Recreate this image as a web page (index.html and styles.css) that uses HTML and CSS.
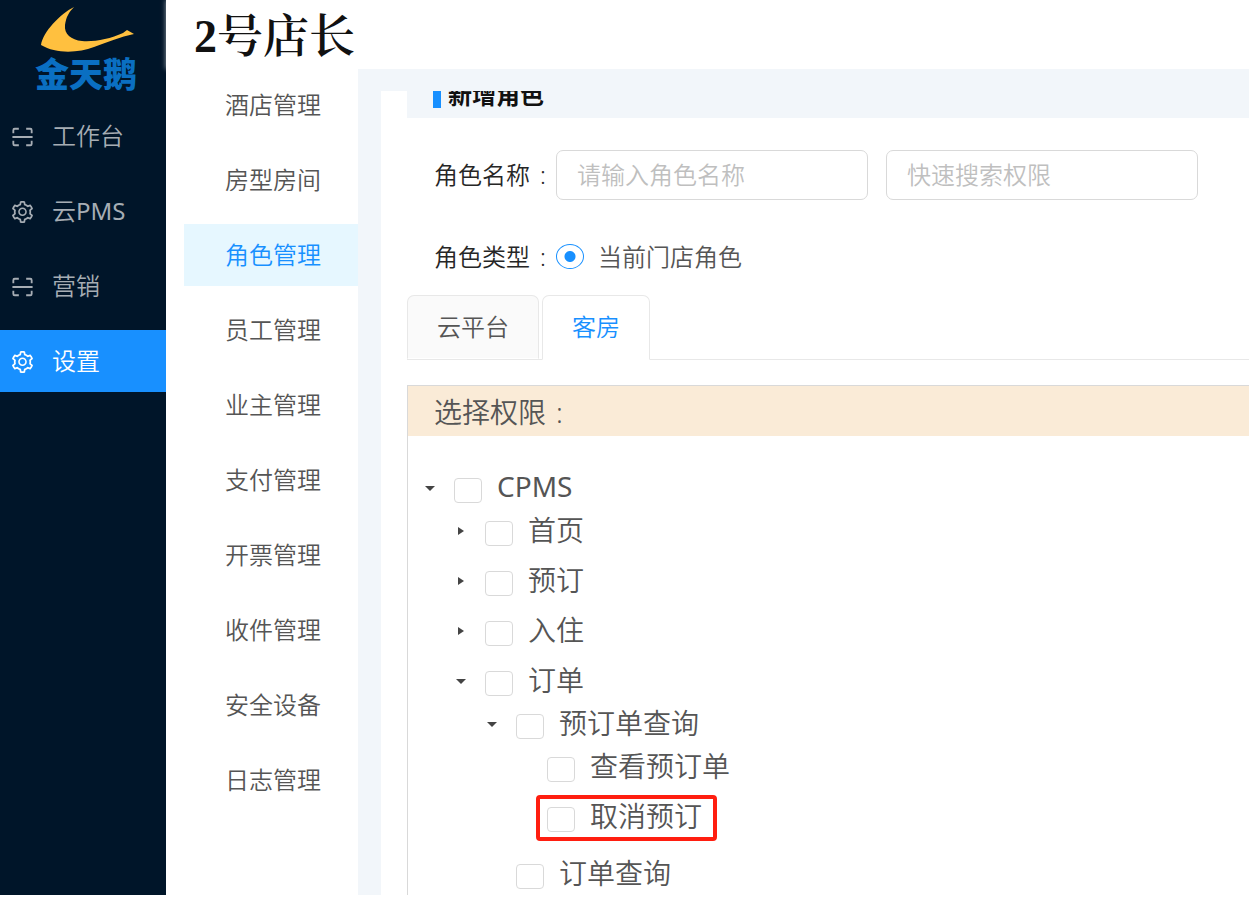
FILE: index.html
```html
<!DOCTYPE html>
<html lang="zh-CN">

<head>
    <meta charset="UTF-8">
    <meta name="viewport" content="width=device-width, initial-scale=1.0">
    <title>角色管理</title>
    <link rel="stylesheet" href="styles.css">
</head>

<body>
    <!-- 图标 -->
    <svg class="icon-defs" width="0" height="0">
        <symbol id="icon-scan" viewBox="0 0 24 24">
            <path d="M2 8V4.500Q2 3 3.500 3H8M16 3h4.500Q22 3 22 4.500V8M2 16v3.500Q2 21 3.500 21H8M16 21h4.500Q22 21 22 19.500V16M1 12h22" fill="none" stroke="currentColor" stroke-width="2" />
        </symbol>
        <symbol id="icon-setting" viewBox="64 64 896 896">
            <path fill="currentColor" d="M924.8 625.7l-65.5-56c3.1-19 4.7-38.4 4.7-57.8s-1.6-38.8-4.7-57.8l65.5-56a32.03 32.03 0 0 0 9.3-35.2l-.9-2.6a443.74 443.74 0 0 0-79.7-137.9l-1.800-2.100a32.12 32.12 0 0 0-35.1-9.500l-81.300 28.900c-30-24.600-63.500-44-99.700-57.600l-15.700-85a32.05 32.05 0 0 0-25.800-25.700l-2.700-.5c-52.100-9.400-106.900-9.400-159 0l-2.700.5a32.05 32.05 0 0 0-25.800 25.700l-15.800 85.400a351.86 351.86 0 0 0-99 57.400l-81.900-29.100a32 32 0 0 0-35.100 9.500l-1.800 2.100a446.02 446.02 0 0 0-79.700 137.900l-.9 2.600c-4.500 12.500-.8 26.500 9.300 35.200l66.300 56.600c-3.100 18.800-4.600 38-4.600 57.100 0 19.200 1.500 38.400 4.600 57.100L99 625.500a32.03 32.03 0 0 0-9.300 35.200l.9 2.600c18.100 50.400 44.900 96.900 79.700 137.900l1.800 2.100a32.12 32.12 0 0 0 35.100 9.500l81.900-29.100c29.800 24.500 63.100 43.900 99 57.400l15.800 85.400a32.05 32.05 0 0 0 25.800 25.700l2.700.5a449.4 449.4 0 0 0 159 0l2.700-.5a32.05 32.05 0 0 0 25.800-25.700l15.700-85a350 350 0 0 0 99.700-57.600l81.300 28.900a32 32 0 0 0 35.100-9.500l1.800-2.100c34.800-41.100 61.600-87.500 79.700-137.900l.9-2.600c4.500-12.300.8-26.300-9.300-35zM788.300 465.900c2.500 15.100 3.800 30.600 3.800 46.100s-1.300 31-3.800 46.100l-6.600 40.100 74.700 63.900a370.03 370.03 0 0 1-42.600 73.600L721 702.800l-31.400 25.800c-23.900 19.600-50.500 35-79.300 45.800l-38.100 14.300-17.900 97a377.5 377.5 0 0 1-85 0l-17.900-97.200-37.800-14.500c-28.500-10.800-55-26.200-78.700-45.700l-31.400-25.900-93.400 33.200c-17-22.900-31.200-47.600-42.600-73.600l75.500-64.500-6.500-40c-2.400-14.900-3.700-30.300-3.700-45.500 0-15.300 1.200-30.600 3.700-45.500l6.500-40-75.500-64.500c11.300-26.100 25.600-50.700 42.600-73.600l93.400 33.200 31.400-25.900c23.700-19.500 50.200-34.900 78.700-45.700l37.900-14.300 17.900-97.200c28.100-3.200 56.800-3.200 85 0l17.900 97 38.100 14.300c28.700 10.800 55.400 26.200 79.300 45.800l31.400 25.800 92.800-32.900c17 22.900 31.200 47.600 42.600 73.600L781.800 426l6.500 39.900zM512 326c-97.200 0-176 78.800-176 176s78.800 176 176 176 176-78.800 176-176-78.800-176-176-176zm79.200 255.200A111.600 111.600 0 0 1 512 614c-29.900 0-58-11.700-79.200-32.800A111.600 111.600 0 0 1 400 502c0-29.900 11.700-58 32.800-79.200C454 401.600 482.100 390 512 390c29.900 0 58 11.600 79.200 32.800A111.600 111.600 0 0 1 624 502c0 29.900-11.700 58-32.800 79.200z" />
        </symbol>
    </svg>

    <div class="layout">
        <aside class="sidebar">
            <div class="logo">
                <svg class="logo-swan" viewBox="0 0 96 48" width="96" height="48">
                    <path d="M34 1C20 8 3 26 1 39C16 48 38 47 54 41C68 36 80 31 94 28L87 24L83 27C70 33 54 36 42 35C31 34 24 28 25 19C26 11 29 6 34 1Z" fill="#ffc03f" />
                </svg>
                <span class="logo-text">金天鹅</span>
            </div>
            <nav class="main-menu">
                <a href="#"><svg><use href="#icon-scan" /></svg><span>工作台</span></a>
                <a href="#"><svg><use href="#icon-setting" /></svg><span>云<b>PMS</b></span></a>
                <a href="#"><svg><use href="#icon-scan" /></svg><span>营销</span></a>
                <a href="#" class="active"><svg><use href="#icon-setting" /></svg><span>设置</span></a>
            </nav>
        </aside>

        <div class="main">
            <header class="header">
                <h1 class="brand">2号店长</h1>
            </header>
            <div class="body">
                <nav class="sub-menu">
                    <a href="#">酒店管理</a>
                    <a href="#">房型房间</a>
                    <a href="#" class="active">角色管理</a>
                    <a href="#">员工管理</a>
                    <a href="#">业主管理</a>
                    <a href="#">支付管理</a>
                    <a href="#">开票管理</a>
                    <a href="#">收件管理</a>
                    <a href="#">安全设备</a>
                    <a href="#">日志管理</a>
                </nav>

                <main class="content">
                    <div class="title-bar">
                        <h2 class="title">新增角色</h2>
                    </div>

                    <form class="role-form">
                        <div class="form-row">
                            <label class="form-label" for="roleName">角色名称<span class="colon">:</span></label>
                            <div class="inputs">
                                <input type="text" id="roleName" placeholder="请输入角色名称">
                                <input type="text" id="search" aria-label="快速搜索权限" placeholder="快速搜索权限">
                            </div>
                        </div>
                        <div class="form-row type-row">
                            <span class="form-label">角色类型<span class="colon">:</span></span>
                            <label class="radio">
                                <input type="radio" name="roleType" checked><span>当前门店角色</span>
                            </label>
                        </div>
                    </form>

                    <div class="tabs">
                        <button type="button" class="tab">云平台</button>
                        <button type="button" class="tab active">客房</button>
                    </div>

                    <section class="panel">
                        <h3 class="panel-title">选择权限<span class="colon">:</span></h3>
                        <ul class="tree">
                            <li>
                                <div class="node"><i class="arrow open"></i><label><input type="checkbox"><b>CPMS</b></label></div>
                                <ul>
                                    <li>
                                        <div class="node"><i class="arrow"></i><label><input type="checkbox"><span>首页</span></label></div>
                                    </li>
                                    <li>
                                        <div class="node"><i class="arrow"></i><label><input type="checkbox"><span>预订</span></label></div>
                                    </li>
                                    <li>
                                        <div class="node"><i class="arrow"></i><label><input type="checkbox"><span>入住</span></label></div>
                                    </li>
                                    <li>
                                        <div class="node"><i class="arrow open"></i><label><input type="checkbox"><span>订单</span></label></div>
                                        <ul>
                                            <li>
                                                <div class="node"><i class="arrow open"></i><label><input type="checkbox"><span>预订单查询</span></label></div>
                                                <ul>
                                                    <li>
                                                        <div class="node"><i class="arrow none"></i><label><input type="checkbox"><span>查看预订单</span></label></div>
                                                    </li>
                                                    <li>
                                                        <div class="node"><i class="arrow none"></i><label class="marked"><input type="checkbox"><span>取消预订</span></label></div>
                                                    </li>
                                                </ul>
                                            </li>
                                            <li>
                                                <div class="node"><i class="arrow none"></i><label><input type="checkbox"><span>订单查询</span></label></div>
                                            </li>
                                        </ul>
                                    </li>
                                </ul>
                            </li>
                        </ul>
                    </section>
                </main>
            </div>
        </div>
    </div>
</body>

</html>
```
FILE: styles.css
```css
* {
    box-sizing: border-box;
}

body {
    margin: 0;
    background-color: #fff;
    color: #555;
    font-family: "Noto Sans", "Noto Sans CJK SC", sans-serif;
    font-size: 24px;
    font-weight: 350;
}

a {
    color: inherit;
    text-decoration: none;
}

/* 英文字母用常规字重 */
b {
    font-weight: 400;
}

h1,
h2,
h3,
ul {
    margin: 0;
    padding: 0;
}

ul {
    list-style: none;
}

input,
button {
    margin: 0;
    font: inherit;
    color: inherit;
}

.icon-defs {
    position: absolute;
}

.layout {
    display: flex;
    height: 100vh;
    padding-bottom: 5px;
    overflow: hidden;
}

/* 左侧主菜单 */
.sidebar {
    flex: none;
    width: 166px;
    background-color: #001529;
    color: #a6adb4;
}

.logo {
    display: flex;
    flex-direction: column;
    align-items: center;
    height: 105px;
    padding-top: 6px;
    padding-left: 6px;
}

.logo-swan {
    display: block;
    margin-left: 4px;
}

.logo-text {
    color: #0a6fc2;
    font-size: 34px;
    font-style: oblique 5deg;
    font-weight: 900;
    line-height: 40px;
}

.main-menu a {
    display: flex;
    align-items: center;
    gap: 18px;
    height: 62px;
    margin-bottom: 13px;
    padding-left: 11px;
}

.main-menu svg {
    width: 23px;
    height: 22px;
    margin-top: 2px;
}

.main-menu span {
    line-height: 34px;
}

.main-menu .active {
    background-color: #1890ff;
    color: #fff;
}

.main {
    flex: 1;
    display: flex;
    flex-direction: column;
    min-width: 0;
}

.header {
    flex: none;
    height: 69px;
    padding-left: 28px;
    background-color: #fff;
    box-shadow: 0 0 5px rgba(255, 255, 255, 0.6);
}

.brand {
    color: #111;
    font-family: "Liberation Serif", "Noto Serif CJK SC", "Noto Sans CJK SC", serif;
    font-size: 46px;
    font-weight: 600;
    line-height: 74px;
}

.body {
    flex: 1;
    display: flex;
    min-height: 0;
    background-color: #f2f6fa;
}

/* 二级菜单 */
.sub-menu {
    flex: none;
    width: 192px;
    padding-top: 5px;
    padding-left: 18px;
    background-color: #fff;
}

.sub-menu a {
    display: block;
    height: 62px;
    margin-bottom: 13px;
    padding-left: 41px;
    line-height: 62px;
}

.sub-menu .active {
    background-color: #e6f7ff;
    color: #1890ff;
}

.content {
    flex: 1;
    display: flex;
    flex-direction: column;
    min-width: 0;
    margin-top: 22px;
    margin-left: 23px;
    padding-left: 26px;
    background-color: #fff;
}

/* 标题随页面滚动，只露出下半部分 */
.title-bar {
    flex: none;
    display: flex;
    align-items: flex-end;
    height: 27px;
    padding: 0 26px 10px;
    background-color: #f2f6fa;
    overflow: hidden;
}

.title {
    padding-left: 7px;
    border-left: 8px solid #1890ff;
    color: #111;
    font-size: 24px;
    font-weight: 700;
    line-height: 26px;
}

.role-form {
    padding: 32px 27px 0;
}

.form-row {
    display: flex;
    align-items: center;
    min-height: 49px;
}

.type-row {
    margin-top: 32px;
}

.form-label {
    flex: none;
    width: 122px;
    padding-bottom: 3px;
    color: #262626;
}

.colon {
    margin-left: 10px;
}

.inputs {
    flex: 1;
    display: flex;
    gap: 18px;
    max-width: 642px;
}

.inputs input {
    flex: 1;
    min-width: 0;
    height: 50px;
    padding: 0 20px 2px;
    border: 1px solid #d9d9d9;
    border-radius: 7px;
    background-color: #fff;
}

.inputs input::placeholder {
    color: #bfbfbf;
}

.radio {
    display: flex;
    align-items: center;
    gap: 14px;
}

.radio span {
    padding-bottom: 3px;
}

.radio input {
    appearance: none;
    width: 28px;
    height: 25px;
    border: 1px solid #1890ff;
    border-radius: 50%;
    background: radial-gradient(circle, #1890ff 5px, #fff 6px);
}

/* 标签页 */
.tabs {
    flex: none;
    display: flex;
    gap: 3px;
    height: 65px;
    margin-top: 14px;
    border-bottom: 1px solid #e8e8e8;
}

.tab {
    height: 64px;
    padding: 0 29px 4px;
    border: 1px solid #e8e8e8;
    border-bottom-color: #fff;
    border-radius: 7px 7px 0 0;
    background-color: #fafafa;
}

.tab.active {
    height: 65px;
    background-color: #fff;
    color: #1890ff;
}

/* 权限树 */
.panel {
    flex: 1;
    min-height: 0;
    margin-top: 25px;
    border-top: 1px solid #d9d9d9;
    border-left: 1px solid #d9d9d9;
    font-size: 28px;
}

.panel-title {
    height: 50px;
    padding-left: 26px;
    background-color: #faebd7;
    font-size: 28px;
    font-weight: 350;
    line-height: 52px;
}

.tree {
    padding: 31px 0 0 10px;
}

.tree ul {
    padding-left: 31px;
}

.tree li + li {
    margin-top: 12px;
}

.tree ul li:first-child {
    margin-top: 5px;
}

.tree ul ul ul {
    padding-bottom: 7px;
}

.node,
.node label {
    display: flex;
    align-items: center;
    height: 38px;
}

.node label {
    position: relative;
    gap: 15px;
}

.node input {
    appearance: none;
    width: 28px;
    height: 25px;
    margin-top: 8px;
    border: 1px solid #d9d9d9;
    border-radius: 4px;
    background-color: #fff;
}

.arrow {
    display: flex;
    justify-content: center;
    width: 23px;
    margin-top: 4px;
    margin-right: 13px;
}

.arrow::before {
    content: "";
    border-top: 4px solid transparent;
    border-bottom: 4px solid transparent;
    border-left: 6px solid #444;
}

.arrow.open::before {
    border-top: 5px solid #444;
    border-right: 5px solid transparent;
    border-bottom: 0;
    border-left: 5px solid transparent;
}

.arrow.none::before {
    display: none;
}

.marked::after {
    content: "";
    position: absolute;
    inset: -1px -15px -7px -11px;
    border: 4px solid #ff1e10;
    border-radius: 4px;
}
```
